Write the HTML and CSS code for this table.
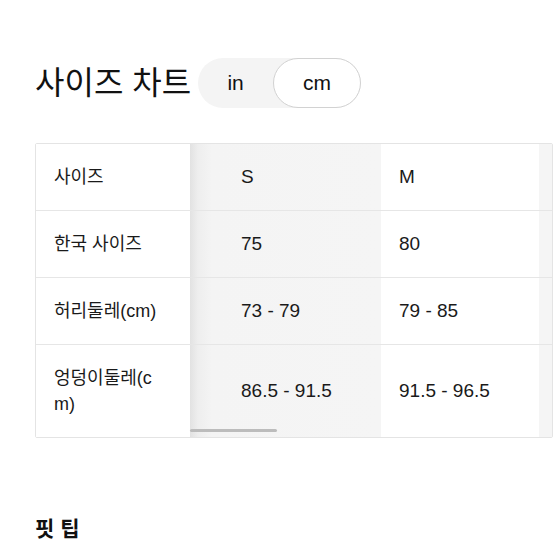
FILE: index.html
```html
<!DOCTYPE html>
<html lang="ko">
<head>
<meta charset="utf-8">
<title>사이즈 차트</title>
<link rel="stylesheet" href="styles.css">
</head>
<body>
<main class="page">
  <div class="title-row">
    <h2 class="title">사이즈 차트</h2>
    <div class="unit-toggle">
      <span class="unit">in</span>
      <span class="unit active">cm</span>
    </div>
  </div>

  <div class="table-wrap">
    <div class="size-table">
      <div class="cell label">사이즈</div>
      <div class="cell col-s">S</div>
      <div class="cell col-m">M</div>
      <div class="cell col-next"></div>

      <div class="cell label">한국 사이즈</div>
      <div class="cell col-s">75</div>
      <div class="cell col-m">80</div>
      <div class="cell col-next"></div>

      <div class="cell label">허리둘레(cm)</div>
      <div class="cell col-s">73 - 79</div>
      <div class="cell col-m">79 - 85</div>
      <div class="cell col-next"></div>

      <div class="cell label last">엉덩이둘레(c<br>m)</div>
      <div class="cell col-s last">86.5 - 91.5</div>
      <div class="cell col-m last">91.5 - 96.5</div>
      <div class="cell col-next last"></div>
    </div>
    <div class="scrollbar"></div>
  </div>

  <h3 class="fit-title">핏 팁</h3>
</main>
</body>
</html>
```

FILE: styles.css
```css
html, body {
  margin: 0;
  padding: 0;
  background: #ffffff;
}

body {
  font-family: "Liberation Sans", "Noto Sans CJK KR", sans-serif;
  color: #1a1a1a;
}

.page {
  padding: 58px 0 0 35px;
}

.title-row {
  display: flex;
  align-items: center;
  gap: 7px;
}

.title {
  margin: 0;
  font-size: 32px;
  font-weight: 400;
  line-height: 50px;
  color: #111;
}

.unit-toggle {
  display: flex;
  height: 50px;
  background: #f4f4f4;
  border-radius: 25px;
}

.unit {
  display: flex;
  align-items: center;
  justify-content: center;
  font-size: 21px;
  color: #111;
}

.unit:first-child {
  width: 75px;
}

.unit.active {
  width: 86px;
  background: #fff;
  border: 1px solid #d2d2d2;
  border-radius: 25px;
}

.table-wrap {
  position: relative;
  margin-top: 35px;
  width: 516px;
  border: 1px solid #e4e4e4;
  border-radius: 2px;
}

.size-table {
  display: grid;
  grid-template-columns: 154px 191px 158px 1fr;
}

.cell {
  display: flex;
  align-items: center;
  padding: 20px 0;
  line-height: 26px;
  font-size: 19px;
  border-bottom: 1px solid #e6e6e6;
  white-space: nowrap;
}

.cell.last {
  border-bottom: none;
}

.label {
  padding-left: 18px;
  font-size: 18px;
  background: #fff;
}

.col-s {
  padding-left: 51px;
  background: linear-gradient(to right, #e2e2e2 0px, #eeeeee 8px, #f4f4f4 22px, #f5f5f5 100%);
}

.col-m {
  padding-left: 18px;
  background: #fff;
}

.col-next {
  background: #f5f5f5;
}

.scrollbar {
  position: absolute;
  left: 154px;
  bottom: 5px;
  width: 87px;
  height: 3px;
  border-radius: 2px;
  background: #bcbcbc;
}

.fit-title {
  margin: 76px 0 0;
  font-size: 21px;
  font-weight: 700;
  color: #111;
  line-height: 30px;
}
```
